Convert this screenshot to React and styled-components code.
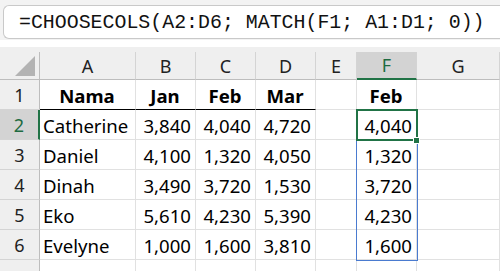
import React from "react";
import styled, { createGlobalStyle } from "styled-components";

const GlobalStyle = createGlobalStyle`
  body {
    margin: 0;
    background: #ffffff;
    font-family: "Noto Sans", "Liberation Sans", sans-serif;
  }
`;

const Page = styled.div`
  width: 500px;
  height: 271px;
  overflow: hidden;
  background: #ffffff;
`;

const FormulaArea = styled.div`
  background: #f3f3f3;
  padding: 5px 0 0 3px;
  height: 40px;
  box-sizing: border-box;
`;

const FormulaBox = styled.div`
  height: 34px;
  box-sizing: border-box;
  border: 1px solid #c9c9c9;
  border-right: none;
  border-radius: 6px 0 0 6px;
  background: #ffffff;
  display: flex;
  align-items: center;
  padding-left: 15px;
  font-family: "Liberation Mono", "DejaVu Sans Mono", monospace;
  font-size: 19.9px;
  color: #111;
  white-space: nowrap;
`;

const Gap = styled.div`
  height: 7px;
  background: #ffffff;
`;

const Sheet = styled.div`
  position: relative;
`;

const HeaderStrip = styled.div`
  height: 5px;
  background: #efefef;
`;

const Grid = styled.div`
  display: grid;
  grid-template-columns: 40px 96px 60px 60px 60px 41px 60px 1fr;
  grid-template-rows: 28px repeat(7, 30px);
`;

const Corner = styled.div`
  position: relative;
  background: #efefef;
  border-right: 1px solid #bdbdbd;
  border-bottom: 1px solid #bdbdbd;
  box-sizing: border-box;
  &::after {
    content: "";
    position: absolute;
    right: 4px;
    bottom: 3px;
    width: 0;
    height: 0;
    border-left: 20px solid transparent;
    border-bottom: 20px solid #b3b3b3;
  }
`;

const ColHead = styled.div`
  background: ${(p) => (p.$active ? "#d3d3d3" : "#efefef")};
  color: ${(p) => (p.$active ? "#1e6b41" : "#222")};
  border-right: 1px solid #d4d4d4;
  border-bottom: ${(p) => (p.$active ? "2px solid #217346" : "1px solid #bdbdbd")};
  box-sizing: border-box;
  display: flex;
  align-items: center;
  justify-content: center;
  font-size: 18px;
`;

const RowHead = styled.div`
  background: ${(p) => (p.$active ? "#d3d3d3" : "#efefef")};
  color: ${(p) => (p.$active ? "#1e6b41" : "#222")};
  border-right: ${(p) => (p.$active ? "2px solid #217346" : "1px solid #bdbdbd")};
  border-bottom: 1px solid #d4d4d4;
  box-sizing: border-box;
  display: flex;
  align-items: center;
  justify-content: center;
  font-size: 18px;
`;

const Cell = styled.div`
  border-right: 1px solid #e1e1e1;
  border-bottom: ${(p) => (p.$tableHead ? "1px solid #000000" : "1px solid #e1e1e1")};
  box-sizing: border-box;
  display: flex;
  align-items: center;
  justify-content: ${(p) =>
    p.$align === "center" ? "center" : p.$align === "right" ? "flex-end" : "flex-start"};
  padding: 1px 4px 0 3px;
  font-size: 18.6px;
  font-weight: ${(p) => (p.$bold ? 700 : 400)};
  color: #000;
  white-space: nowrap;
  overflow: hidden;
`;

/* overlays positioned relative to Sheet (sheet top = page y 47) */
const SpillRange = styled.div`
  position: absolute;
  left: 356px;
  top: 62px;
  width: 62px;
  height: 152px;
  box-sizing: border-box;
  border: 1px solid #4a7bd0;
  pointer-events: none;
`;

const ActiveCell = styled.div`
  position: absolute;
  left: 356px;
  top: 62px;
  width: 62px;
  height: 32px;
  box-sizing: border-box;
  border: 2px solid #217346;
  pointer-events: none;
`;

const FillHandle = styled.div`
  position: absolute;
  left: 413px;
  top: 90px;
  width: 7px;
  height: 7px;
  box-sizing: border-box;
  background: #217346;
  border: 1px solid #ffffff;
`;

const columns = ["A", "B", "C", "D", "E", "F", "G"];

const data = [
  ["Catherine", "3,840", "4,040", "4,720", "4,040"],
  ["Daniel", "4,100", "1,320", "4,050", "1,320"],
  ["Dinah", "3,490", "3,720", "1,530", "3,720"],
  ["Eko", "5,610", "4,230", "5,390", "4,230"],
  ["Evelyne", "1,000", "1,600", "3,810", "1,600"],
];

export default function App() {
  return (
    <Page>
      <GlobalStyle />
      <FormulaArea>
        <FormulaBox>=CHOOSECOLS(A2:D6; MATCH(F1; A1:D1; 0))</FormulaBox>
      </FormulaArea>
      <Gap />
      <Sheet>
        <HeaderStrip />
        <Grid>
          <Corner />
          {columns.map((c) => (
            <ColHead key={c} $active={c === "F"}>
              {c}
            </ColHead>
          ))}

          <RowHead>1</RowHead>
          <Cell $align="center" $bold $tableHead>Nama</Cell>
          <Cell $align="center" $bold $tableHead>Jan</Cell>
          <Cell $align="center" $bold $tableHead>Feb</Cell>
          <Cell $align="center" $bold $tableHead>Mar</Cell>
          <Cell />
          <Cell $align="center" $bold>Feb</Cell>
          <Cell />

          {data.map((row, r) => (
            <React.Fragment key={r}>
              <RowHead $active={r === 0}>{r + 2}</RowHead>
              <Cell>{row[0]}</Cell>
              <Cell $align="right">{row[1]}</Cell>
              <Cell $align="right">{row[2]}</Cell>
              <Cell $align="right">{row[3]}</Cell>
              <Cell />
              <Cell $align="right">{row[4]}</Cell>
              <Cell />
            </React.Fragment>
          ))}

          <RowHead />
          {columns.map((c) => (
            <Cell key={c} />
          ))}
        </Grid>
        <SpillRange />
        <ActiveCell />
        <FillHandle />
      </Sheet>
    </Page>
  );
}
